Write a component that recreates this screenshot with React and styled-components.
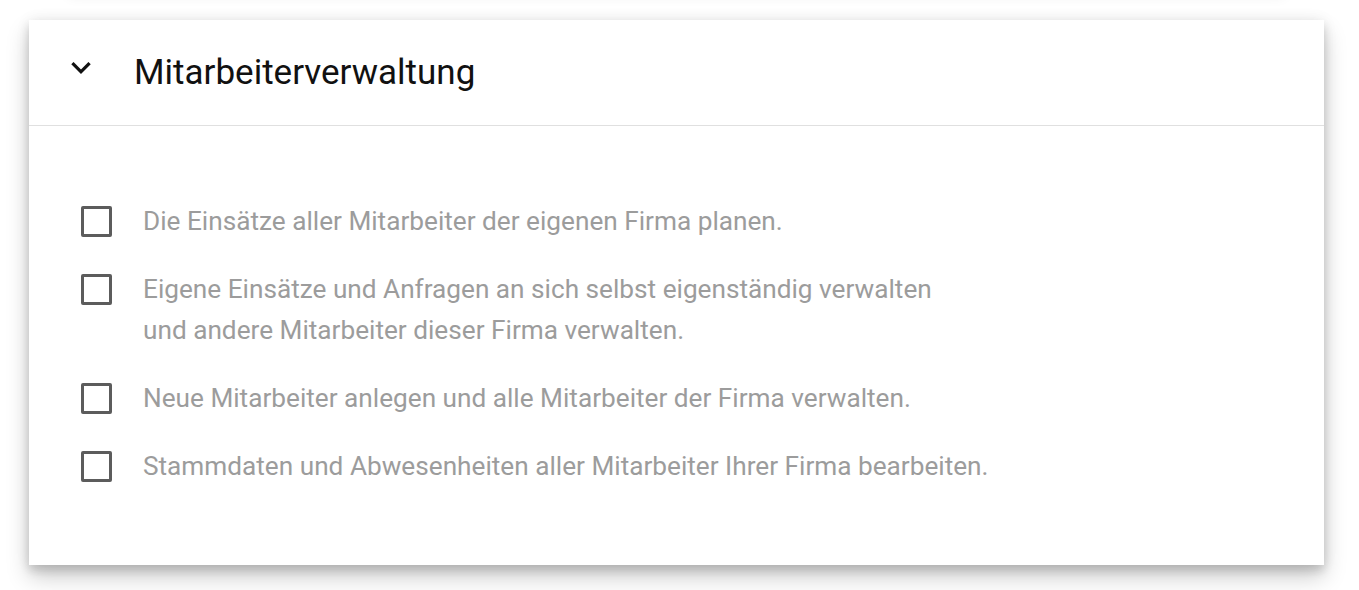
import React from "react";
import styled, { createGlobalStyle } from "styled-components";

const GlobalStyle = createGlobalStyle`
  html, body {
    margin: 0;
    padding: 0;
    background: #ffffff;
    font-family: Roboto, "Noto Sans", Arial, sans-serif;
    overflow: hidden;
  }
`;

const Page = styled.div`
  display: flex;
  flex-direction: column;
  gap: 28px;
  padding: 0 35px 40px 29px;
  margin-top: -88px;
`;

const Card = styled.section`
  background: #fff;
  margin: 0 ${props => props.inset || "0"};
  box-shadow: ${props =>
    props.flat
      ? "0 4px 12px rgba(0, 0, 0, 0.08)"
      : "0 0 14px rgba(0, 0, 0, 0.07), 0 12px 22px rgba(0, 0, 0, 0.2), 0 6px 9px rgba(0, 0, 0, 0.12)"};
  height: ${props => props.height || "auto"};
`;

const Header = styled.div`
  display: flex;
  align-items: center;
  height: 105px;
  border-bottom: 1px solid #e0e0e0;
  padding-left: 42px;
`;

const Chevron = styled.svg`
  width: 20px;
  height: 12px;
  margin-top: -10px;
  margin-right: 43px;
  flex-shrink: 0;
`;

const Title = styled.h2`
  margin: 0;
  font-weight: 400;
  font-size: 35px;
  color: #111;
`;

const Body = styled.div`
  display: flex;
  flex-direction: column;
  gap: 27px;
  padding: 75px 52px 78px 52px;
`;

const Option = styled.label`
  display: flex;
  align-items: flex-start;
  gap: 31px;
  cursor: pointer;
`;

const Box = styled.span`
  box-sizing: border-box;
  width: 31px;
  height: 31px;
  margin-top: 5px;
  border: 3px solid #5c5c5c;
  border-radius: 2px;
  flex-shrink: 0;
`;

const Text = styled.span`
  font-size: 26.2px;
  line-height: 41px;
  color: #9c9c9c;
`;

const options = [
  ["Die Einsätze aller Mitarbeiter der eigenen Firma planen."],
  [
    "Eigene Einsätze und Anfragen an sich selbst eigenständig verwalten",
    "und andere Mitarbeiter dieser Firma verwalten."
  ],
  ["Neue Mitarbeiter anlegen und alle Mitarbeiter der Firma verwalten."],
  ["Stammdaten und Abwesenheiten aller Mitarbeiter Ihrer Firma bearbeiten."]
];

export default function App() {
  return (
    <>
      <GlobalStyle />
      <Page>
        <Card height="80px" inset="40px" flat />
        <Card>
          <Header>
            <Chevron viewBox="6 8.6 12 7.4">
              <path d="M16.59 8.59L12 13.17 7.41 8.59 6 10l6 6 6-6z" fill="#111" />
            </Chevron>
            <Title>Mitarbeiterverwaltung</Title>
          </Header>
          <Body>
            {options.map((lines, i) => (
              <Option key={i}>
                <Box />
                <Text>
                  {lines.map((l, j) => (
                    <React.Fragment key={j}>
                      {j > 0 && <br />}
                      {l}
                    </React.Fragment>
                  ))}
                </Text>
              </Option>
            ))}
          </Body>
        </Card>
      </Page>
    </>
  );
}
